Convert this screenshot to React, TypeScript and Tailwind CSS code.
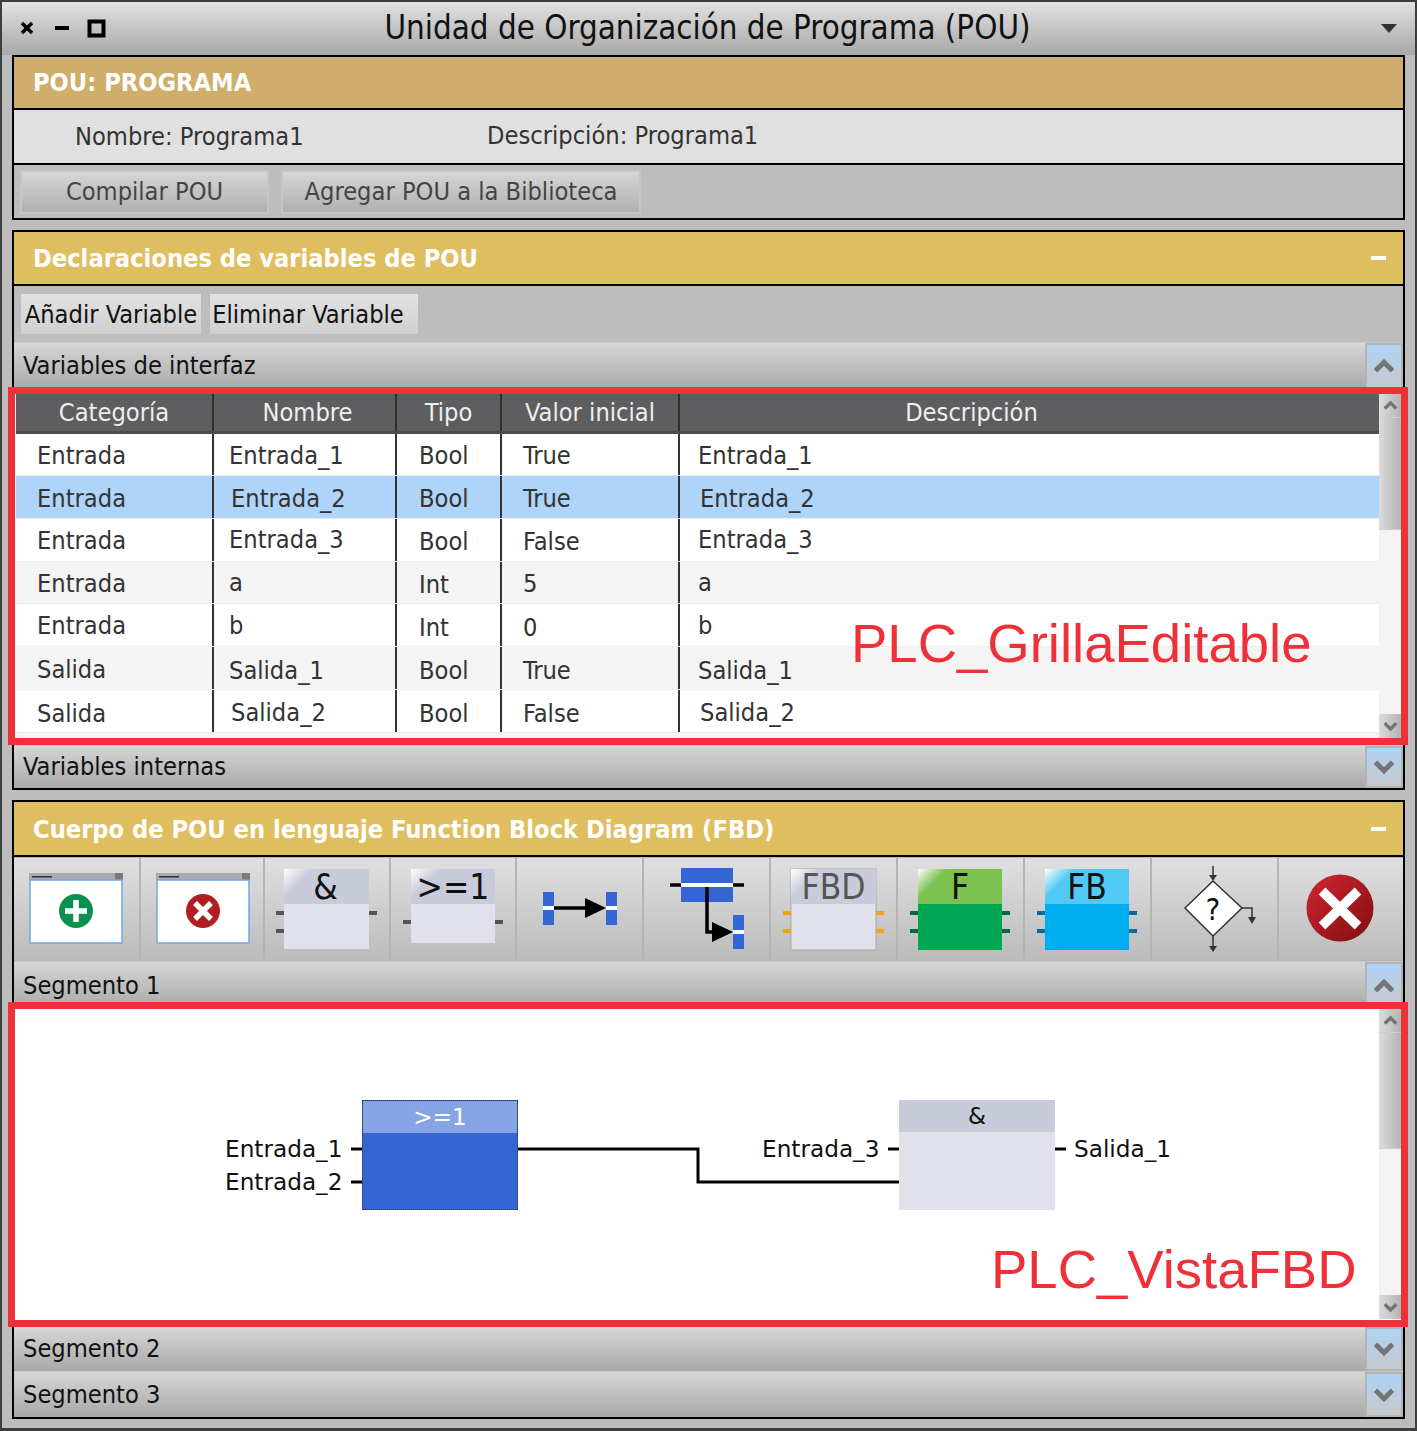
import React from "react";

const F = "font-['DejaVu_Sans_Condensed','DejaVu_Sans',sans-serif] font-stretch-condensed";
const N = "font-['DejaVu_Sans',sans-serif] font-stretch-normal";

function Chevron({ up, size = 22 }: { up?: boolean; size?: number }) {
  return (
    <svg width={size} height={size * 0.7} viewBox="0 0 22 15">
      <path d={up ? "M2.5 12.5 L11 4 L19.5 12.5" : "M2.5 3 L11 11.5 L19.5 3"} fill="none" stroke="#747474" strokeWidth="5" />
    </svg>
  );
}

function Accordion({ label, up, h }: { label: string; up?: boolean; h: string }) {
  return (
    <div className={`flex ${h} shrink-0 bg-gradient-to-b from-[#d6d6d6] to-[#a9a9a9] border-t border-[#c9c9c9]`}>
      <div className="flex-1 flex items-center pl-[9px] text-[25.2px] text-[#111]">{label}</div>
      <div className="w-[38px] flex items-center justify-center bg-gradient-to-b from-[#aed3f7] to-[#c6c9cc] border-2 border-[#b4b4b4]">
        <Chevron up={up} />
      </div>
    </div>
  );
}

function PanelHeader({ text, bg, minus, h }: { text: string; bg: string; minus?: boolean; h: string }) {
  return (
    <div className={`${h} shrink-0 flex items-center justify-between pl-[19px] pr-[17px] border-b-2 border-black ${bg}`}>
      <span className={`text-white font-bold text-[25.2px] ${minus ? "pt-[2px]" : ""}`}>{text}</span>
      {minus && <span className="w-[15px] h-[4px] bg-white" />}
    </div>
  );
}

const cols = ["w-[198px]", "w-[183px]", "w-[105px]", "w-[178px]", "flex-1"];
const pads = ["pl-[21px]", "pl-[15px]", "pl-[22px]", "pl-[21px]", "pl-[18px]"];
const padsShift = ["pl-[21px]", "pl-[17px]", "pl-[22px]", "pl-[21px]", "pl-[20px]"];
const dy = ["", "pt-[2px]", "pt-[4px]", "pt-[6px]"];

const rows: { bg: string; h: string; t: string[]; d: number[]; shift?: boolean }[] = [
  { bg: "bg-white", h: "h-[42px]", t: ["Entrada", "Entrada_1", "Bool", "True", "Entrada_1"], d: [1, 1, 1, 1, 1] },
  { bg: "bg-[#aed4fa]", h: "h-[43px]", t: ["Entrada", "Entrada_2", "Bool", "True", "Entrada_2"], d: [2, 2, 2, 2, 2], shift: true },
  { bg: "bg-white", h: "h-[43px]", t: ["Entrada", "Entrada_3", "Bool", "False", "Entrada_3"], d: [1, 0, 2, 2, 0] },
  { bg: "bg-[#f4f4f4]", h: "h-[42px]", t: ["Entrada", "a", "Int", "5", "a"], d: [1, 0, 2, 1, 0] },
  { bg: "bg-white", h: "h-[43px]", t: ["Entrada", "b", "Int", "0", "b"], d: [1, 1, 3, 3, 1] },
  { bg: "bg-[#f4f4f4]", h: "h-[43px]", t: ["Salida", "Salida_1", "Bool", "True", "Salida_1"], d: [2, 3, 3, 3, 3] },
  { bg: "bg-white", h: "h-[43px]", t: ["Salida", "Salida_2", "Bool", "False", "Salida_2"], d: [3, 2, 3, 3, 2], shift: true },
];

function Scrollbar({ thumb, bottom }: { thumb: string; bottom?: string }) {
  return (
    <div className={`w-[22px] shrink-0 flex flex-col bg-[#f3f3f3] ${bottom ?? ""}`}>
      <div className="h-[24px] flex items-center justify-center bg-gradient-to-r from-[#dcdcdc] to-[#b4b4b4] border-b border-[#cfcfcf]">
        <Chevron up size={15} />
      </div>
      <div className={`${thumb} bg-gradient-to-r from-[#dcdcdc] to-[#b4b4b4] border-b border-[#cfcfcf]`} />
      <div className="flex-1" />
      <div className="h-[24px] flex items-center justify-center bg-gradient-to-r from-[#dcdcdc] to-[#b4b4b4]">
        <Chevron size={15} />
      </div>
    </div>
  );
}

function Table() {
  const heads = [
    { t: "Categoría", c: "" },
    { t: "Nombre", c: "pl-[6px]" },
    { t: "Tipo", c: "" },
    { t: "Valor inicial", c: "" },
    { t: "Descripción", c: "pr-[116px]" },
  ];
  return (
    <div className="flex h-[356px] shrink-0 bg-[#f4f4f4] pl-[2px] pr-[2px] pt-[5px] pb-[7px]">
      <div className="flex-1 flex flex-col overflow-hidden">
        <div className="flex h-[40px] shrink-0 bg-[#5e5e60] border-b-[3px] border-[#4c4c4c] text-[#eeeeee] text-[25.2px]">
          {heads.map((h, i) => (
            <div key={h.t} className={`${cols[i]} ${h.c} flex items-center justify-center ${i < 4 ? "border-r-2 border-[#2e2e2e]" : ""}`}>{h.t}</div>
          ))}
        </div>
        {rows.map((r, ri) => (
          <div key={ri} className={`flex shrink-0 ${r.h} ${r.bg} border-b border-[#ececec] text-[25.2px] text-[#333]`}>
            {r.t.map((t, i) => (
              <div key={i} className={`${cols[i]} ${r.shift ? padsShift[i] : pads[i]} ${dy[r.d[i]]} flex items-center ${i < 4 ? "border-r-2 border-[#333]" : ""}`}>{t}</div>
            ))}
          </div>
        ))}
      </div>
      <Scrollbar thumb="h-[112px]" />
    </div>
  );
}

function Tool({ x, w = 125, children }: { x: number; w?: number; children: React.ReactNode }) {
  return (
    <div className="bg-gradient-to-b from-[#e0e0e0] to-[#bbbbbb]">
      <svg className="block w-full h-full" viewBox={`${x} 858 ${w} 102`}>{children}</svg>
    </div>
  );
}

const txt = { fontFamily: "DejaVu Sans", textAnchor: "middle" as const };

function WindowIcon({ x, ok }: { x: number; ok: boolean }) {
  const cx = x + 47;
  return (
    <>
      <rect x={x} y={873} width={94} height={7} fill="#a9aaae" />
      <rect x={x + 3} y={876} width={20} height={1.5} fill="#333" />
      <rect x={x + 86} y={873} width={8} height={7} fill="#7a7a7a" />
      <rect x={x + 1} y={880} width={92} height={63} fill="#fff" stroke="#6fa8e6" strokeWidth="1.5" />
      <circle cx={cx} cy={911} r={17} fill={ok ? "#0a9150" : "#b01e24"} />
      {ok ? (
        <path d={`M${cx - 11} 911 H${cx + 11} M${cx} 900 V922`} stroke="#fff" strokeWidth="5.5" />
      ) : (
        <path d={`M${cx - 8} 903 L${cx + 8} 919 M${cx + 8} 903 L${cx - 8} 919`} stroke="#fff" strokeWidth="5.5" />
      )}
    </>
  );
}

function BlockIcon(p: { x: number; w: number; h: number; head: string; body: string; stub: string; label: string; color?: string; stubs: number[]; rstubs: number[]; stroke?: string; id: string; dx?: number }) {
  return (
    <>
      <defs>
        <linearGradient id={p.id} gradientUnits="userSpaceOnUse" x1={p.x} y1={869} x2={p.x + 15} y2={884}>
          <stop offset="0" stopColor="#fff" stopOpacity="1" />
          <stop offset="1" stopColor="#fff" stopOpacity="0" />
        </linearGradient>
      </defs>
      {p.stubs.map((y) => <rect key={y} x={p.x - 8} y={y - 2} width={8} height={4} fill={p.stub} />)}
      {p.rstubs.map((y) => <rect key={y} x={p.x + p.w} y={y - 2} width={8} height={4} fill={p.stub} />)}
      <rect x={p.x} y={869} width={p.w} height={p.h} fill={p.body} stroke={p.stroke} />
      <rect x={p.x} y={869} width={p.w} height={35} fill={p.head} />
      <rect x={p.x} y={869} width={p.w} height={35} fill={`url(#${p.id})`} />
      <text x={p.x + p.w / 2 + (p.dx ?? 0)} y={899} fontSize={35} fill={p.color ?? "#111"} style={txt}>{p.label}</text>
    </>
  );
}

function Toolbar() {
  return (
    <div className="grid grid-cols-[125px_122px_124px_124px_125px_125px_125px_125px_125px_125px_124px] gap-x-[2px] h-[104px] shrink-0 bg-[#b4b4b4] py-[1px]">
      <Tool x={14}><WindowIcon x={29} ok /></Tool>
      <Tool x={141} w={122}><WindowIcon x={156} ok={false} /></Tool>
      <Tool x={265} w={124}><BlockIcon id="g1" x={284} w={85} h={80} dx={-1} head="#c8cbda" body="#e0e1ea" stub="#555" label="&" stubs={[913, 931]} rstubs={[913]} /></Tool>
      <Tool x={391} w={124}><BlockIcon id="g2" x={411} w={84} h={74} head="#c8cbda" body="#e0e1ea" stub="#555" label=">=1" stubs={[922]} rstubs={[922]} /></Tool>
      <Tool x={517}>
        <rect x={543} y={892} width={11} height={33} fill="#3366d3" />
        <rect x={606} y={892} width={11} height={33} fill="#3366d3" />
        <rect x={543} y={906} width={11} height={4} fill="#fff" />
        <rect x={606} y={906} width={11} height={4} fill="#fff" />
        <path d="M554 908 H588" stroke="#000" strokeWidth="3.5" />
        <path d="M585 898 L606 908 L585 918 Z" fill="#000" />
      </Tool>
      <Tool x={644}>
        <path d="M670 885 H744" stroke="#000" strokeWidth="3.5" />
        <rect x={681} y={868} width={52} height={34} fill="#3366d3" />
        <rect x={681} y={883} width={52} height={4} fill="#fff" />
        <path d="M707 887 V932 H714" fill="none" stroke="#000" strokeWidth="3.5" />
        <path d="M712 922 L733 932 L712 942 Z" fill="#000" />
        <rect x={733} y={915} width={11} height={34} fill="#3366d3" />
        <rect x={733} y={930} width={11} height={4} fill="#fff" />
      </Tool>
      <Tool x={771}><BlockIcon id="g3" x={791} w={85} h={81} head="#c8cbda" body="#e0e1ea" stub="#f5a30a" stroke="#a9a9a9" label="FBD" color="#555" stubs={[913, 931]} rstubs={[913, 931]} /></Tool>
      <Tool x={898}><BlockIcon id="g4" x={918} w={84} h={81} head="#7cc250" body="#00a651" stub="#00693e" label="F" stubs={[913, 931]} rstubs={[913, 931]} /></Tool>
      <Tool x={1025}><BlockIcon id="g5" x={1045} w={84} h={81} head="#52c8f5" body="#00aeef" stub="#0a6a98" label="FB" stubs={[913, 931]} rstubs={[913, 931]} /></Tool>
      <Tool x={1152}>
        <path d="M1213 866 V878 M1213 936 V947 M1242 908 H1252 V919" fill="none" stroke="#333" strokeWidth="1.5" />
        <path d="M1209 875 H1217 L1213 881 Z M1209 946 H1217 L1213 952 Z M1248 917 H1256 L1252 924 Z" fill="#333" />
        <path d="M1213 881 L1242 908 L1213 936 L1185 908 Z" fill="#fff" stroke="#333" strokeWidth="1.5" />
        <text x={1213} y={920} fontSize={31} fill="#111" style={txt}>?</text>
      </Tool>
      <Tool x={1279} w={124}>
        <defs>
          <linearGradient id="rd" x1="0" y1="0" x2="1" y2="1">
            <stop offset="0" stopColor="#d2262e" />
            <stop offset="1" stopColor="#7f0e12" />
          </linearGradient>
        </defs>
        <circle cx={1340} cy={908} r={33.5} fill="url(#rd)" />
        <path d="M1322 891 L1358 926 M1358 891 L1322 926" stroke="#fff" strokeWidth="9.5" />
      </Tool>
    </div>
  );
}

function Diagram() {
  return (
    <div className="flex h-[317px] shrink-0 bg-white pr-[2px]">
      <div className={`flex-1 relative text-[23.2px] text-[#111] ${N}`}>
        <svg className="absolute inset-0 w-full h-full" viewBox="14 1009 1365 317">
          <path d="M351 1149 H362 M351 1182 H362 M518 1149 H698 V1182 H899 M888 1149 H899 M1055 1149 H1066" fill="none" stroke="#000" strokeWidth="3" />
        </svg>
        <div className="absolute left-[348px] top-[91px] w-[156px] h-[110px] flex flex-col bg-[#3366d3] border border-dotted border-[#333]">
          <div className="h-[32px] bg-[#86a3e6] text-white flex items-center justify-center">&gt;=1</div>
        </div>
        <div className="absolute left-[885px] top-[91px] w-[156px] h-[110px] flex flex-col bg-[#e0e1ea]">
          <div className="h-[32px] bg-[#c8cbda] flex items-center justify-center">&amp;</div>
        </div>
        <div className="absolute left-[211px] top-[123px]">Entrada_1</div>
        <div className="absolute left-[211px] top-[156px]">Entrada_2</div>
        <div className="absolute left-[748px] top-[123px]">Entrada_3</div>
        <div className="absolute left-[1060px] top-[123px]">Salida_1</div>
      </div>
      <Scrollbar thumb="h-[116px]" bottom="mb-[7px]" />
    </div>
  );
}

export default function App() {
  return (
    <div className={`relative w-[1417px] h-[1431px] overflow-hidden flex flex-col bg-[#bdbdbd] border-x-2 border-t-2 border-b-[3px] border-[#3d3d3d] px-[10px] ${F}`}>
      <div className="-mx-[10px] h-[53px] shrink-0 flex items-center pl-[18px] pr-[18px] bg-gradient-to-b from-[#e2e2e2] to-[#a8a8a8] text-[#111]">
        <svg width="90" height="24" viewBox="0 0 90 24">
          <path d="M2 6 L12 16 M12 6 L2 16" stroke="#000" strokeWidth="3.5" />
          <rect x="35" y="9" width="14" height="4" fill="#000" />
          <rect x="69.5" y="4.5" width="14" height="14" fill="none" stroke="#000" strokeWidth="4" />
        </svg>
        <div className="flex-1 text-center text-[32.8px] pr-[76px]">Unidad de Organización de Programa (POU)</div>
        <svg width="16" height="10" viewBox="0 0 16 10"><path d="M0 0 H16 L8 9 Z" fill="#333" /></svg>
      </div>

      <div className="h-[165px] shrink-0 flex flex-col border-2 border-black">
        <PanelHeader text="POU: PROGRAMA" bg="bg-[#cfae6c]" h="h-[53px]" />
        <div className="h-[55px] shrink-0 flex items-center bg-[#e0e0e0] border-b-2 border-black text-[25.2px] text-[#333]">
          <span className="pl-[61px] w-[473px]">Nombre: Programa1</span>
          <span className="pb-[2px]">Descripción: Programa1</span>
        </div>
        <div className="flex-1 flex items-center gap-[12px] px-[6px] text-[25.2px] text-[#444]">
          <div className="w-[249px] h-[44px] flex items-center justify-center bg-gradient-to-b from-[#d6d6d6] to-[#b0b0b0] border-2 border-[#c6c6c6]">Compilar POU</div>
          <div className="w-[360px] h-[44px] flex items-center justify-center bg-gradient-to-b from-[#d6d6d6] to-[#b0b0b0] border-2 border-[#c6c6c6]">Agregar POU a la Biblioteca</div>
        </div>
      </div>

      <div className="h-[560px] mt-[10px] shrink-0 flex flex-col border-2 border-black">
        <PanelHeader text="Declaraciones de variables de POU" bg="bg-[#dfbe5f]" minus h="h-[54px]" />
        <div className="h-[56px] shrink-0 flex items-center gap-[5px] px-[5px] text-[25.2px] text-[#111] whitespace-nowrap">
          <div className="w-[184px] h-[44px] pt-[2px] flex items-center justify-center bg-gradient-to-b from-[#e2e2e2] to-[#cfcfcf] border-2 border-[#bcbcbc]">Añadir Variable</div>
          <div className="w-[212px] h-[44px] pt-[2px] pr-[12px] flex items-center justify-center bg-gradient-to-b from-[#e2e2e2] to-[#cfcfcf] border-2 border-[#bcbcbc]">Eliminar Variable</div>
        </div>
        <Accordion label="Variables de interfaz" up h="h-[47px]" />
        <Table />
        <Accordion label="Variables internas" h="h-[43px]" />
      </div>

      <div className="h-[619px] mt-[10px] shrink-0 flex flex-col border-2 border-black">
        <PanelHeader text="Cuerpo de POU en lenguaje Function Block Diagram (FBD)" bg="bg-[#dfbe5f]" minus h="h-[55px]" />
        <Toolbar />
        <Accordion label="Segmento 1" up h="h-[48px]" />
        <Diagram />
        <Accordion label="Segmento 2" h="h-[45px]" />
        <Accordion label="Segmento 3" h="h-[46px]" />
      </div>

      <div className="absolute left-[6px] top-[385px] w-[1400px] h-[358px] border-[7px] border-[#ee3138] pointer-events-none" />
      <div className="absolute left-[6px] top-[1000px] w-[1400px] h-[325px] border-[7px] border-[#ee3138] pointer-events-none" />
      <div className="absolute left-[849px] top-[611px] text-[54.5px] leading-[62px] text-[#ee3138] font-['Liberation_Sans',sans-serif] font-stretch-normal whitespace-nowrap">PLC_GrillaEditable</div>
      <div className="absolute left-[989px] top-[1237px] text-[54.5px] leading-[62px] text-[#ee3138] font-['Liberation_Sans',sans-serif] font-stretch-normal whitespace-nowrap">PLC_VistaFBD</div>
    </div>
  );
}
